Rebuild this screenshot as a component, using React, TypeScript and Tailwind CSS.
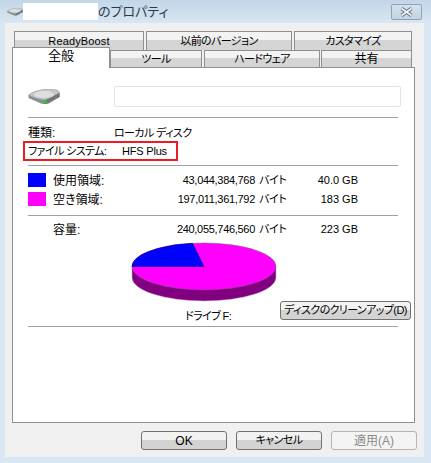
import React from 'react';

const font = { fontFamily: '"Liberation Sans", "Noto Sans CJK JP", sans-serif' };
const kana = 'text-[11px] tracking-[-0.6px]';

const DriveIcon: React.FC<{ className?: string }> = ({ className }) => (
    <svg viewBox="0 0 32 16" className={className}>
        <path d="M0.5 6 V9 L13 14.5 Q17 15.5 21 14.5 L31.5 8 V3.5 L17 10 Z" fill="#8b9094" />
        <path d="M17 11 V15 L31.5 8 V4 Z" fill="#6f7579" />
        <path d="M0.5 6 Q6 1.5 16 0.5 L26 0.5 Q31 1 31.5 3.5 Q25 8 17 11 Q8 10.5 0.5 6 Z" fill="#c4c7c9" stroke="#85898c" strokeWidth="0.5" />
        <ellipse cx="16" cy="5.5" rx="10" ry="3.5" fill="#dcdedf" />
        <rect x="15.5" y="11.5" width="3.5" height="3" fill="#35c035" />
    </svg>
);

const Tab: React.FC<{ label: string; className: string }> = ({ label, className }) => (
    <div className={`flex items-center justify-center whitespace-nowrap border border-b-0 border-[#8e8f8f] bg-gradient-to-b from-[#f3f3f3] from-45% to-[#d5d5d5] to-45% leading-none text-black ${className}`}>
        {label}
    </div>
);

const Divider: React.FC<{ className: string }> = ({ className }) => (
    <div className={`h-px w-[370px] bg-[#a0a0a0] ${className}`}></div>
);

const SizeRow: React.FC<{ swatch?: string; label: string; bytes: string; size: string; className: string }> = ({ swatch, label, bytes, size, className }) => (
    <div className={`flex h-[14px] items-center whitespace-nowrap text-xs leading-none text-black ${className}`}>
        <div className={`h-[14px] w-[18px] ${swatch || ''}`}></div>
        <div className="ml-[7px] w-[100px] pt-px">{label}</div>
        <div className="w-[102px] pt-px text-right text-[11px] tracking-[-0.3px]">{bytes}</div>
        <div className="ml-1 w-[28px] pt-px text-[11px] tracking-[-0.4px]">バイト</div>
        <div className="w-[71px] pt-px text-right text-[11px]">{size}</div>
    </div>
);

const FootButton: React.FC<{ label: string; textClass: string; disabled?: boolean }> = ({ label, textClass, disabled }) => (
    <button
        className={`flex h-[19px] w-[86px] items-center justify-center rounded-[3px] border leading-none ${textClass} ${
            disabled
                ? 'border-[#b5b5b5] bg-[#f4f4f4] text-[#8a8a8a]'
                : 'border-[#707070] bg-gradient-to-b from-[#f2f2f2] from-45% to-[#d3d3d3] to-45% text-black'
        }`}
    >
        {label}
    </button>
);

export default function App() {
    return (
        <div className="h-[463px] w-[431px] overflow-hidden bg-[#d9e6f3] [font-feature-settings:'palt']" style={font}>
            {/* title bar */}
            <div className="flex h-[23px] items-center bg-gradient-to-b from-[#c3d6e8] to-[#d9e6f3] pl-[7px] pr-[9px]">
                <DriveIcon className="h-[10px] w-[16px]" />
                <div className="h-[17px] w-[75px] bg-white"></div>
                <span className="text-[13px] leading-none text-[#2b3a4a]">のプロパティ</span>
                <div className="ml-auto flex h-4 w-[31px] items-center justify-center rounded-[2px] border border-[#8fa3b8] bg-gradient-to-b from-[#d5e1ec] to-[#c3d3e2]">
                    <svg viewBox="0 0 15 10" className="h-[10px] w-[15px]">
                        <path d="M2.5 1.5 L12.5 8.5 M12.5 1.5 L2.5 8.5" stroke="#5c6875" strokeWidth="3.4" />
                        <path d="M2.5 1.5 L12.5 8.5 M12.5 1.5 L2.5 8.5" stroke="#f2f4f6" strokeWidth="1.8" />
                    </svg>
                </div>
            </div>

            {/* dialog body */}
            <div className="mx-[5px] h-[434px] w-[419px] bg-[#f0f0f0] pl-[7px] pt-2">
                <div className="ml-[2px] flex h-[19px] gap-[2px]">
                    <Tab label="ReadyBoost" className="w-[130px] text-[11px] tracking-[0.15px]" />
                    <Tab label="以前のバージョン" className={`w-[146px] ${kana}`} />
                    <Tab label="カスタマイズ" className={`w-[118px] ${kana}`} />
                </div>
                <div className="relative flex h-[17px] pl-[98px]">
                    <div className="absolute bottom-[-1px] left-0 z-10 flex h-[21px] w-[98px] items-start justify-center border border-b-0 border-[#8e8f8f] bg-white pt-[1px] text-[13px] leading-none text-black">
                        全般
                    </div>
                    <Tab label="ツール" className={`w-[92px] ${kana}`} />
                    <Tab label="ハードウェア" className={`ml-[2px] w-[116px] ${kana}`} />
                    <Tab label="共有" className="ml-[1px] w-[91px] text-xs" />
                </div>
                <div className="h-[356px] w-[403px] border border-[#8e8f8f] bg-white pl-[15px]">
                    <div className="mt-[18px] flex h-[21px] items-center">
                        <DriveIcon className="h-[16px] w-[32px]" />
                        <div className="ml-[54px] h-[21px] w-[287px] rounded-[2px] border border-[#dfe3ea] bg-white"></div>
                    </div>
                    <Divider className="mt-[10px]" />
                    <div className="mt-[9px] flex h-[12px] items-center whitespace-nowrap text-xs leading-none text-black">
                        <div className="w-[86px]">種類:</div>
                        <div className={kana}>ローカル ディスク</div>
                    </div>
                    <div className="-ml-[5px] mt-[2px] flex h-5 w-[155px] items-center whitespace-nowrap border-2 border-[#ed1c24] pl-[3px] leading-none text-black">
                        <div className={`w-[94px] ${kana}`}>ファイル システム:</div>
                        <div className="text-[11px] tracking-[-0.2px]">HFS Plus</div>
                    </div>
                    <Divider className="mt-1" />
                    <SizeRow swatch="bg-[#0000ff]" label="使用領域:" bytes="43,044,384,768" size="40.0 GB" className="mt-[7px]" />
                    <SizeRow swatch="bg-[#ff00ff]" label="空き領域:" bytes="197,011,361,792" size="183 GB" className="mt-[5px]" />
                    <Divider className="mt-[9px]" />
                    <SizeRow label="容量:" bytes="240,055,746,560" size="223 GB" className="mt-[6px]" />
                    <div className="ml-[103px] mt-[6px] h-[60px]">
                        <svg width="146" height="60" viewBox="0 0 146 60">
                            <path d="M1 24.5 V35.5 A72 23.5 0 0 0 145 35.5 V24.5 Z" fill="#800080" stroke="#c9b3c9" strokeWidth="0.5" />
                            <ellipse cx="73" cy="24.5" rx="72" ry="23.5" fill="#ff00ff" stroke="#7a5a7a" strokeWidth="0.5" />
                            <path d="M73 24.5 L1 24.5 A72 23.5 0 0 1 61.5 1.3 Z" fill="#0000ff" stroke="#000060" strokeWidth="0.5" />
                        </svg>
                    </div>
                    <div className="flex h-[19px] items-center">
                        <div className={`w-[252px] whitespace-nowrap pl-[157px] pt-[10px] leading-none text-black ${kana}`}>ドライブ F:</div>
                        <button className={`h-[19px] w-[131px] -translate-y-[1px] whitespace-nowrap rounded-[3px] border border-[#707070] bg-gradient-to-b from-[#f2f2f2] from-45% to-[#d3d3d3] to-45% leading-none text-black ${kana}`}>
                            ディスクのクリーンアップ(D)
                        </button>
                    </div>
                    <Divider className="mt-[5px]" />
                </div>
                <div className="mr-[7px] mt-2 flex justify-end gap-[9px]">
                    <FootButton label="OK" textClass="text-xs" />
                    <FootButton label="キャンセル" textClass={kana} />
                    <FootButton label="適用(A)" textClass="text-xs" disabled />
                </div>
            </div>
        </div>
    );
}
